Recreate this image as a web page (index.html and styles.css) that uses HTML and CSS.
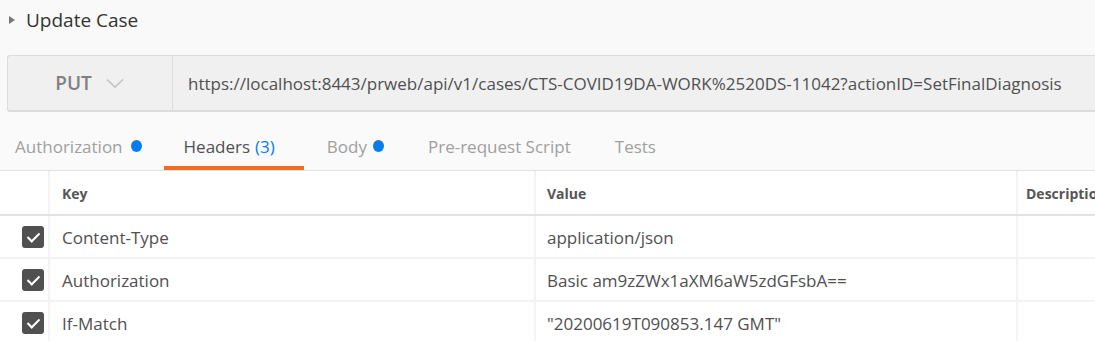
FILE: index.html
```html
<!DOCTYPE html>
<html lang="en">
<head>
    <meta charset="UTF-8">
    <title>Update Case</title>
    <link rel="stylesheet" href="styles.css">
</head>
<body>
    <div class="request-title">
        <span class="caret"></span>
        <h1>Update Case</h1>
    </div>

    <div class="url-bar">
        <div class="method">
            <span>PUT</span>
            <svg class="chevron" width="18" height="11" viewBox="0 0 18 11">
                <path d="M1 1.5 L9 9 L17 1.5" fill="none" stroke="#c4c4c4" stroke-width="1.7"/>
            </svg>
        </div>
        <div class="url">https://localhost:8443/prweb/api/v1/cases/CTS-COVID19DA-WORK%2520DS-11042?actionID=SetFinalDiagnosis</div>
    </div>

    <div class="tabs">
        <div class="tab">Authorization <span class="dot"></span></div>
        <div class="tab active">Headers <span class="count">(3)</span></div>
        <div class="tab">Body <span class="dot"></span></div>
        <div class="tab">Pre-request Script</div>
        <div class="tab">Tests</div>
    </div>

    <div class="headers-table">
        <div class="row head">
            <div class="cell check"></div>
            <div class="cell key">Key</div>
            <div class="cell value">Value</div>
            <div class="cell desc">Description</div>
        </div>
        <div class="row">
            <div class="cell check"><span class="checkbox"></span></div>
            <div class="cell key">Content-Type</div>
            <div class="cell value">application/json</div>
            <div class="cell desc"></div>
        </div>
        <div class="row">
            <div class="cell check"><span class="checkbox"></span></div>
            <div class="cell key">Authorization</div>
            <div class="cell value">Basic am9zZWx1aXM6aW5zdGFsbA==</div>
            <div class="cell desc"></div>
        </div>
        <div class="row">
            <div class="cell check"><span class="checkbox"></span></div>
            <div class="cell key">If-Match</div>
            <div class="cell value">"20200619T090853.147 GMT"</div>
            <div class="cell desc"></div>
        </div>
    </div>
</body>
</html>
```

FILE: styles.css
```css
* {
    margin: 0;
    padding: 0;
    box-sizing: border-box;
}

body {
    font-family: 'Open Sans', 'Noto Sans', sans-serif;
    background: #f9f9f9;
    color: #505050;
    overflow: hidden;
}

.request-title {
    display: flex;
    align-items: center;
    height: 40px;
    padding-left: 9px;
}

.caret {
    width: 0;
    height: 0;
    border-top: 4px solid transparent;
    border-bottom: 4px solid transparent;
    border-left: 6px solid #777;
    margin-right: 11px;
}

.request-title h1 {
    font-size: 19px;
    font-weight: 400;
    color: #333;
}

.url-bar {
    display: flex;
    margin: 15px 0 0 7px;
    width: 1100px;
    height: 57px;
    background: #f0f0f0;
    border: 1px solid #dcdcdc;
    border-bottom-width: 2px;
    border-radius: 3px;
}

.method {
    width: 165px;
    display: flex;
    align-items: center;
    justify-content: center;
    gap: 14px;
    padding-right: 1px;
    border-right: 1px solid #dcdcdc;
    font-size: 19px;
    font-weight: 600;
    color: #808080;
}

.url {
    display: flex;
    align-items: center;
    padding-left: 15px;
    font-size: 17px;
    color: #505050;
    white-space: nowrap;
}

.tabs {
    display: flex;
    height: 59px;
    margin-left: -7px;
    border-bottom: 1px solid #e2e2e2;
    background: #fafafa;
}

.tab {
    display: flex;
    align-items: center;
    gap: 6px;
    padding: 14px 22px 0;
    font-size: 17px;
    color: #a0a0a0;
    white-space: nowrap;
    border-bottom: 4px solid transparent;
}

.tab:first-child {
    gap: 8px;
}

.tab.active {
    color: #505050;
    border-bottom-color: #f26b24;
    padding: 14px 29px 0 20px;
    gap: 5px;
}

.tab:nth-child(3) {
    padding-left: 23px;
}

.tab .count {
    color: #097bed;
}

.dot {
    width: 11px;
    height: 12px;
    border-radius: 50%;
    background: #097bed;
}

.headers-table {
    background: #fff;
}

.row {
    display: grid;
    grid-template-columns: 48px 486px 482px 1fr;
    height: 43px;
    border-bottom: 2px solid #f3f3f3;
}

.row.head {
    height: 45px;
    border-bottom: 2px solid #e3e3e3;
}

.cell {
    display: flex;
    align-items: center;
    padding: 2px 0 0 12px;
    font-size: 17px;
    color: #505050;
    white-space: nowrap;
    overflow: hidden;
    border-left: 2px solid #f3f3f3;
}

.cell.value {
    padding-left: 11px;
}

.cell.desc {
    padding-left: 8px;
}

.cell.check {
    border-left: none;
    justify-content: flex-end;
    padding: 0 4px 0 0;
}

.row.head .cell {
    padding-top: 1px;
    font-size: 14px;
    font-weight: 700;
    color: #555;
}

.checkbox {
    position: relative;
    width: 22px;
    height: 22px;
    border-radius: 3px;
    background: #505050;
}

.checkbox::after {
    content: "";
    position: absolute;
    left: 8px;
    top: 4px;
    width: 5px;
    height: 10px;
    border: solid #fff;
    border-width: 0 2.5px 2.5px 0;
    transform: rotate(45deg);
}
```
